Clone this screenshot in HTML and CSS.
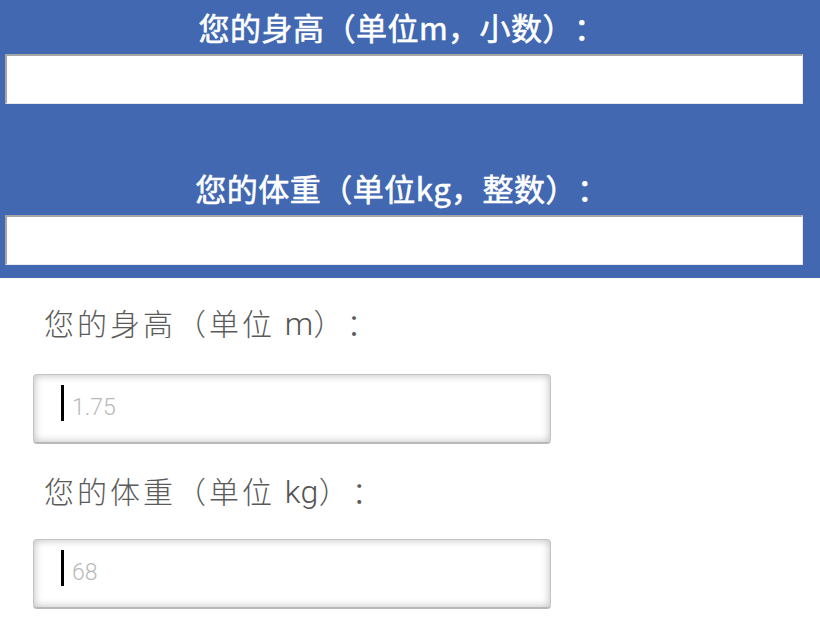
FILE: index.html
```html
<!DOCTYPE html>
<html lang="zh">
<head>
<meta charset="utf-8">
<title>BMI</title>
<link rel="stylesheet" href="styles.css">
</head>
<body>
<section class="banner">
  <div class="banner-label first">您的身高（单位m，小数）：</div>
  <div class="banner-input"></div>
  <div class="banner-label second">您的体重（单位kg，整数）：</div>
  <div class="banner-input"></div>
</section>
<section class="form">
  <label class="field-label first">您的身高（单位 <span class="unit">m</span>）：</label>
  <div class="field">
    <input class="field-input" type="text" placeholder="1.75">
    <span class="caret"></span>
  </div>
  <label class="field-label second">您的体重（单位 <span class="unit">kg</span>）：</label>
  <div class="field">
    <input class="field-input" type="text" placeholder="68">
    <span class="caret"></span>
  </div>
</section>
</body>
</html>
```

FILE: styles.css
```css
* { box-sizing: border-box; }
html, body { margin: 0; padding: 0; background: #fff; }
body {
  font-family: "Noto Sans CJK SC", "Noto Sans", sans-serif;
  width: 820px;
  text-spacing-trim: space-all;
}
.banner {
  background: #4168b0;
  padding: 0 0 13px 0;
  display: flex;
  flex-direction: column;
}
.banner-label {
  color: #fff;
  font-weight: 400;
  -webkit-text-stroke: 0.6px #fff;
  font-size: 31px;
  letter-spacing: 0.5px;
  text-align: center;
  padding-right: 16px;
  line-height: 48px;
  height: 48px;
  text-spacing-trim: space-all;
}
.banner-label.first { margin-top: 3px; margin-bottom: 3px; }
.banner-label.second { margin-top: 60px; margin-bottom: 3px; }
.banner-input {
  margin: 0 17px 0 5px;
  height: 50px;
  background: #fff;
  border-top: 2px solid #a6a6a6;
  border-left: 2px solid #a6a6a6;
  border-bottom: 1px solid #e8e8ee;
  border-right: 1px solid #e8e8ee;
}
.form {
  display: flex;
  flex-direction: column;
  padding: 0 0 0 33px;
}
.field-label {
  display: block;
  color: #5a5a5a;
  font-weight: 300;
  font-size: 30px;
  letter-spacing: 3px;
  line-height: 40px;
  height: 40px;
  padding-left: 11px;
  text-spacing-trim: space-all;
}
.unit {
  font-family: Roboto, "Noto Sans", sans-serif;
  font-weight: 300;
  font-size: 32px;
  line-height: 1;
  letter-spacing: 0.5px;
  color: #555;
}
.field-label.first { margin-top: 24px; margin-bottom: 32px; }
.field-label.second { margin-top: 26px; margin-bottom: 29px; }
.field {
  position: relative;
  width: 518px;
  height: 70px;
}
.field-input {
  width: 100%;
  height: 100%;
  margin: 0;
  border: 1px solid #c4c4c4;
  border-bottom: 2px solid #b8b8b8;
  border-radius: 4px;
  background: #fff;
  box-shadow: inset 0 0 8px rgba(0, 0, 0, 0.28);
  padding: 0 0 2px 38px;
  font-family: Roboto, "Noto Sans", sans-serif;
  font-weight: 300;
  font-size: 23px;
  color: #333;
  outline: none;
}
.field-input::placeholder { color: #b9b9b9; }
.caret {
  position: absolute;
  left: 28px;
  top: 11px;
  width: 3px;
  height: 36px;
  background: #000;
}
```
